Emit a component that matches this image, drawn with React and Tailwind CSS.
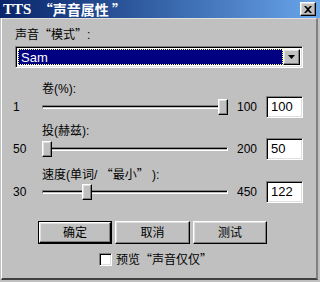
import React from "react";

const raised =
  "border border-t-white border-l-white border-b-black border-r-black shadow-[inset_-1px_-1px_#808080,inset_1px_1px_#dfdfdf]";
const sunken =
  "border border-t-[#808080] border-l-[#808080] border-b-white border-r-white shadow-[inset_1px_1px_#000,inset_-1px_-1px_#dfdfdf]";

// full-width quote marks as in the original dialog
const Q = ({ children }) => (
  <span className="font-['Noto_Sans_CJK_SC',sans-serif]">{children}</span>
);

function SliderRow({ min, max, value, pos }) {
  return (
    <div className="h-[22px] flex items-center pl-[11px]">
      <div className="w-[29px] leading-[14px]">{min}</div>
      <div className="w-[186px] h-[22px] relative flex items-center">
        <div className="w-full h-[4px] border border-t-[#808080] border-l-[#808080] border-b-white border-r-white shadow-[inset_0_1px_#000]" />
        <div
          className={"absolute top-[3px] w-[10px] h-[16px] bg-[#c0c0c0] " + raised}
          style={{ left: pos }}
        />
      </div>
      <div className="w-[9px]" />
      <div className="w-[29px] leading-[14px]">{max}</div>
      <div className={"w-[37px] h-[22px] bg-white flex items-center pl-[4px] " + sunken}>
        <span className="text-[13px] leading-[14px]">{value}</span>
      </div>
    </div>
  );
}

export default function App() {
  return (
    <div className="w-[320px] h-[282px] bg-[#c0c0c0] flex flex-col overflow-hidden font-['Liberation_Sans','Noto_Sans_CJK_SC',sans-serif] text-[12px] text-black">
      {/* title bar */}
      <div className="h-[18px] bg-gradient-to-r from-[#0a246a] to-[#6aa6ea] flex items-center justify-between pl-[3px] pr-[4px]">
        <div className="flex items-center text-white font-bold leading-[18px] whitespace-pre">
          <span className="text-[15px] font-['Liberation_Serif',serif]">TTS  </span>
          <span className="text-[14px] font-['Noto_Sans_CJK_SC',sans-serif]">“声音属性 ”</span>
        </div>
        <div className={"w-[16px] h-[14px] bg-[#c0c0c0] flex items-center justify-center " + raised}>
          <svg width="8" height="7" viewBox="0 0 8 7">
            <path d="M0 0h2l2 2 2-2h2L5 3.5 8 7H6L4 5 2 7H0l3-3.5z" fill="#000" />
          </svg>
        </div>
      </div>

      <div className="flex-1 flex flex-col ml-px mr-[2px] mb-[2px] border-l border-l-white border-t border-t-[#dfdfdf] border-r-2 border-r-[#808080] border-b-2 border-b-[#404040]">
        <div className="mt-[8px] pl-[13px] leading-[14px]">
          声音<Q>“</Q>模式<Q>”</Q>:
        </div>

        {/* dropdown */}
        <div className={"mt-[4px] ml-[13px] w-[288px] h-[22px] bg-white flex p-[2px] " + sunken}>
          <div className="flex-1 border border-dotted border-[#ffff80] bg-[#000080] text-white text-[13px] leading-[16px] pl-[2px]">
            Sam
          </div>
          <div className={"w-[17px] bg-[#c0c0c0] flex items-center justify-center " + raised}>
            <svg width="7" height="4" viewBox="0 0 7 4">
              <path d="M0 0h7L3.5 4z" fill="#000" />
            </svg>
          </div>
        </div>

        <div className="mt-[14px] pl-[40px] h-[14px] leading-[14px]">卷(%):</div>
        <SliderRow min="1" max="100" value="100" pos={176} />

        <div className="mt-[6px] pl-[40px] h-[14px] leading-[14px]">投(赫兹):</div>
        <SliderRow min="50" max="200" value="50" pos={0} />

        <div className="mt-[7px] pl-[40px] h-[14px] leading-[14px]">
          速度(单词/ <Q>“</Q>最小<Q>”</Q> ):
        </div>
        <SliderRow min="30" max="450" value="122" pos={40} />

        {/* buttons */}
        <div className="mt-[18px] flex pl-[36px] gap-[3px]">
          <div className="w-[74px] h-[23px] border border-black">
            <div className={"w-full h-full bg-[#c0c0c0] flex items-center justify-center " + raised}>确定</div>
          </div>
          <div className={"w-[75px] h-[23px] bg-[#c0c0c0] flex items-center justify-center " + raised}>取消</div>
          <div className={"w-[74px] h-[23px] bg-[#c0c0c0] flex items-center justify-center " + raised}>测试</div>
        </div>

        <div className="mt-[8px] flex items-center pl-[97px] gap-[4px]">
          <div className={"w-[13px] h-[13px] bg-white " + sunken} />
          <span className="leading-[14px]">
            预览<Q>“</Q>声音仅仅<Q>”</Q>
          </span>
        </div>
      </div>
    </div>
  );
}
